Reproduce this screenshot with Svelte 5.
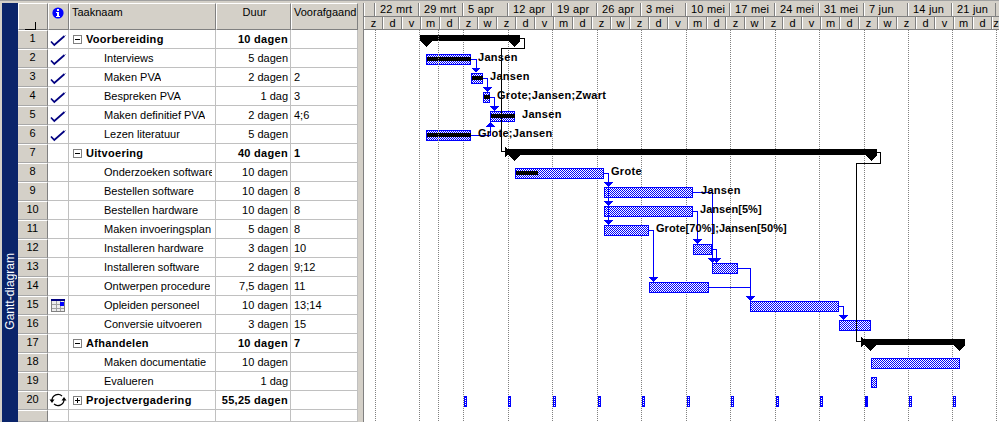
<script lang="ts">
	const weekNames = ['22 mrt', '29 mrt', '5 apr', '12 apr', '19 apr', '26 apr', '3 mei', '10 mei', '17 mei', '24 mei', '31 mei', '7 jun', '14 jun', '21 jun'];
	const gridX = [375, 419, 463, 508, 552, 597, 641, 686, 730, 775, 819, 864, 908, 952, 996];
	const dayLetters = ['z', 'd', 'v', 'm', 'd', 'z', 'w'];

	// chart starts at x=363, the svg uses page coordinates
	const chartLeft = 363;
	const chartRight = 999;
	const weeks = weekNames.map((name, i) => ({
		name,
		width: (i + 1 < gridX.length ? gridX[i + 1] : chartRight) - gridX[i]
	}));
	const days: { letter: string; width: number }[] = [];
	for (let i = 0; i < 34; i++) {
		const a = Math.round(363 + 19.03 * i);
		const b = Math.min(chartRight, Math.round(363 + 19.03 * (i + 1)));
		days.push({ letter: dayLetters[i % 7], width: b - a });
	}

	const tasks = [
		{ n: 1, name: 'Voorbereiding', dur: '10 dagen', pre: '', sum: 'open', check: true },
		{ n: 2, name: 'Interviews', dur: '5 dagen', pre: '', check: true },
		{ n: 3, name: 'Maken PVA', dur: '2 dagen', pre: '2', check: true },
		{ n: 4, name: 'Bespreken PVA', dur: '1 dag', pre: '3', check: true },
		{ n: 5, name: 'Maken definitief PVA', dur: '2 dagen', pre: '4;6', check: true },
		{ n: 6, name: 'Lezen literatuur', dur: '5 dagen', pre: '', check: true },
		{ n: 7, name: 'Uitvoering', dur: '40 dagen', pre: '1', sum: 'open' },
		{ n: 8, name: 'Onderzoeken software', dur: '10 dagen', pre: '' },
		{ n: 9, name: 'Bestellen software', dur: '10 dagen', pre: '8' },
		{ n: 10, name: 'Bestellen hardware', dur: '10 dagen', pre: '8' },
		{ n: 11, name: 'Maken invoeringsplan', dur: '5 dagen', pre: '8' },
		{ n: 12, name: 'Installeren hardware', dur: '3 dagen', pre: '10' },
		{ n: 13, name: 'Installeren software', dur: '2 dagen', pre: '9;12' },
		{ n: 14, name: 'Ontwerpen procedure', dur: '7,5 dagen', pre: '11' },
		{ n: 15, name: 'Opleiden personeel', dur: '10 dagen', pre: '13;14', cal: true },
		{ n: 16, name: 'Conversie uitvoeren', dur: '3 dagen', pre: '15' },
		{ n: 17, name: 'Afhandelen', dur: '10 dagen', pre: '7', sum: 'open' },
		{ n: 18, name: 'Maken documentatie', dur: '10 dagen', pre: '' },
		{ n: 19, name: 'Evalueren', dur: '1 dag', pre: '' },
		{ n: 20, name: 'Projectvergadering', dur: '55,25 dagen', pre: '', sum: 'closed', recur: true }
	];

	const top = (row: number) => 30 + (row - 1) * 19;

	const bars = [
		{ r: 2, a: 426, b: 471, done: 471 },
		{ r: 3, a: 471, b: 483, done: 483 },
		{ r: 4, a: 483, b: 490, done: 490 },
		{ r: 5, a: 490, b: 515, done: 515 },
		{ r: 6, a: 426, b: 471, done: 471 },
		{ r: 8, a: 515, b: 604, done: 538 },
		{ r: 9, a: 604, b: 693 },
		{ r: 10, a: 604, b: 693 },
		{ r: 11, a: 604, b: 649 },
		{ r: 12, a: 693, b: 712 },
		{ r: 13, a: 712, b: 738 },
		{ r: 14, a: 649, b: 709 },
		{ r: 15, a: 750, b: 839 },
		{ r: 16, a: 839, b: 871 },
		{ r: 18, a: 871, b: 960 },
		{ r: 19, a: 871, b: 877 }
	];

	const summaries = [
		{ r: 1, a: 420, b: 520 },
		{ r: 7, a: 508, b: 877 },
		{ r: 17, a: 864, b: 965 }
	];

	const labels = [
		{ r: 2, x: 478, text: 'Jansen' },
		{ r: 3, x: 490, text: 'Jansen' },
		{ r: 4, x: 497, text: 'Grote;Jansen;Zwart' },
		{ r: 5, x: 522, text: 'Jansen' },
		{ r: 6, x: 478, text: 'Grote;Jansen' },
		{ r: 8, x: 611, text: 'Grote' },
		{ r: 9, x: 701, text: 'Jansen' },
		{ r: 10, x: 700, text: 'Jansen[5%]', tight: true },
		{ r: 11, x: 656, text: 'Grote[70%];Jansen[50%]', tight: true }
	];

	// [path, arrow tip x, arrow tip y]
	const links: [string, number, number][] = [
		['M471 59.5H476V70', 476, 72],
		['M483 78.5H487.5V89', 487.5, 91],
		['M490 97.5H494.5V108', 494.5, 110],
		['M604 173.5H608.5V224', 608.5, 186],
		['M604 173.5H608.5V224', 608.5, 205],
		['M604 173.5H608.5V224', 608.5, 224],
		['M693 192.5H712.5V260', 712.5, 262],
		['M712 249.5H716.5V260', 716.5, 262],
		['M693 211.5H697.5V241', 697.5, 243],
		['M649 230.5H653.5V279', 653.5, 281],
		['M738 268.5H750.5V298', 750.5, 300],
		['M709 287.5H750.5V298', 750.5, 300],
		['M839 306.5H843.5V317', 843.5, 319]
	];

	const ticks = [464, 508, 553, 598, 642, 687, 731, 776, 820, 865, 909, 953];
</script>

<div class="page">
	<aside class="sidebar"><span>Gantt-diagram</span></aside>

	<section class="table">
		<div class="row head">
			<div class="corner"><i class="corner-v"></i><i class="corner-h"></i></div>
			<div class="hcell info">
				<svg width="14" height="14" viewBox="0 0 14 14">
					<circle cx="7" cy="7" r="5.6" fill="#0000ff" />
					<rect x="6" y="3" width="2" height="2" fill="#fff" />
					<rect x="5" y="6" width="3" height="1" fill="#fff" />
					<rect x="6" y="6" width="2" height="4" fill="#fff" />
					<rect x="5" y="10" width="4" height="1" fill="#fff" />
				</svg>
			</div>
			<div class="hcell">Taaknaam</div>
			<div class="hcell center">Duur</div>
			<div class="hcell clip">Voorafgaand</div>
		</div>

		{#each tasks as t (t.n)}
			<div class="row" class:bold={t.sum}>
				<div class="num">{t.n}</div>
				<div class="cell ind">
					{#if t.check}
						<svg width="20" height="18" viewBox="0 0 20 18">
							<path d="M3 11.5L6.3 15L16.5 6" fill="none" stroke="#000080" stroke-width="1.7" />
							<rect x="17" y="5" width="1" height="1" fill="#a0a0c0" />
						</svg>
					{:else if t.cal}
						<svg width="20" height="18" viewBox="0 0 20 18">
							<rect x="3.5" y="3.5" width="13" height="12" fill="#ececec" stroke="#808080" />
							<rect x="3" y="3" width="14" height="2" fill="#000080" />
							<path d="M4 8.5H16M4 12.5H16M8.5 5V15M12.5 5V15" stroke="#a0a0a0" />
							<rect x="12" y="6" width="4" height="4" fill="#0000ff" />
						</svg>
					{:else if t.recur}
						<svg width="20" height="18" viewBox="0 0 20 18">
							<path d="M4 9A6 6 0 0 1 14 5" fill="none" stroke="#000" stroke-width="1.2" />
							<path d="M16 9A6 6 0 0 1 6 13" fill="none" stroke="#000" stroke-width="1.2" />
							<path d="M1.5 8.5H6.5L4 12ZM13.5 9.5H18.5L16 6Z" fill="#000" />
						</svg>
					{/if}
				</div>
				<div class="cell name" class:sub={!t.sum}>
					{#if t.sum}
						<svg class="box" width="9" height="9" viewBox="0 0 9 9">
							<rect x="0.5" y="0.5" width="8" height="8" fill="#fff" stroke="#808080" />
							<path d="M2 4.5H7" stroke="#000" />
							{#if t.sum === 'closed'}<path d="M4.5 2V7" stroke="#000" />{/if}
						</svg>
					{/if}
					<span>{t.name}</span>
				</div>
				<div class="cell dur">{t.dur}</div>
				<div class="cell pre">{t.pre}</div>
			</div>
		{/each}

		<div class="row tail">
			<div class="num"></div>
			<div class="cell"></div>
			<div class="cell"></div>
			<div class="cell"></div>
			<div class="cell"></div>
		</div>
	</section>

	<div class="splitter"></div>

	<section class="chart">
		<div class="tier weeks">
			<div class="tcell" style="width:{gridX[0] - chartLeft - 1}px"></div>
			{#each weeks as w}
				<div class="tcell week" style="width:{w.width}px">{w.name}</div>
			{/each}
		</div>
		<div class="tier days">
			{#each days as d}
				<div class="tcell day" style="width:{d.width}px">{d.letter}</div>
			{/each}
		</div>

		<svg class="gantt" width="635" height="392" viewBox="364 30 635 392" shape-rendering="crispEdges">
			<defs>
				<pattern id="check" width="2" height="2" patternUnits="userSpaceOnUse">
					<rect width="2" height="2" fill="#fff" />
					<rect width="1" height="1" fill="#0000ff" />
					<rect x="1" y="1" width="1" height="1" fill="#0000ff" />
				</pattern>
			</defs>

			{#each gridX as x}
				<path d="M{x + 0.5} 30V422" stroke="#808080" stroke-dasharray="1 1" />
			{/each}

			{#each bars as b}
				<rect x={b.a + 0.5} y={top(b.r) + 5.5} width={b.b - b.a - 1} height="10" fill="url(#check)" stroke="#0000ff" />
				{#if b.done}
					<rect x={b.a + 1} y={top(b.r) + 8} width={b.done - b.a - 1} height="4" fill="#000" />
				{/if}
			{/each}

			{#each summaries as s}
				<rect x={s.a} y={top(s.r) + 5} width={s.b - s.a} height="6" fill="#000" />
				<path d="M{s.a} {top(s.r) + 11}h12l-6 6z" fill="#000" />
				<path d="M{s.b - 11} {top(s.r) + 11}h11l-5.5 6z" fill="#000" />
			{/each}

			{#each ticks as x, i}
				<rect x={x + 0.5} y="396.5" width="2" height="10" fill={i === 9 ? '#0000ff' : 'url(#check)'} stroke="#0000ff" />
			{/each}

			<!-- summary links -->
			<path d="M520 38.5H524.5V48.5H501.5V151.5H506" fill="none" stroke="#000" />
			<path d="M505 147L510 152L505 157Z" fill="#000" />
			<path d="M876 152.5H880.5V163.5H856.5V341.5H861" fill="none" stroke="#000" />
			<path d="M861 337L866 342L861 347Z" fill="#000" />

			<!-- task links -->
			{#each links as [d, x, y]}
				<path {d} fill="none" stroke="#0000ff" />
				<path d="M{x - 4.5} {y - 4}h9l-4.5 5z" fill="#0000ff" />
			{/each}
			<path d="M471 135.5H490.5V126" fill="none" stroke="#0000ff" />
			<path d="M486 127h9l-4.5 -5z" fill="#0000ff" />

			<path d="M438.5 30V422" stroke="#808080" stroke-dasharray="1 1" />

			{#each labels as l}
				<text x={l.x} y={top(l.r) + 12} class="label" class:tight={l.tight} shape-rendering="auto">{l.text}</text>
			{/each}
		</svg>
	</section>
</div>

<style>
	:global(body) {
		margin: 0;
		background: #d4d0c8;
	}

	.page {
		display: flex;
		width: 999px;
		height: 422px;
		padding: 2px 0 0 2px;
		box-sizing: border-box;
		overflow: hidden;
		background: #d4d0c8;
		border-top: 1px solid #a0a0a0;
		font-family: "Liberation Sans", Arial, sans-serif;
		font-size: 11px;
		color: #000;
	}

	.sidebar {
		width: 16px;
		flex-shrink: 0;
		background: #0a246a;
		color: #fff;
		display: flex;
		justify-content: center;
		align-items: flex-end;
		padding-bottom: 92px;
		box-sizing: border-box;
		font-size: 12px;
	}

	.sidebar span {
		writing-mode: vertical-rl;
		transform: rotate(180deg);
		white-space: nowrap;
	}

	/* === TABLE === */
	.table {
		width: 340px;
		flex-shrink: 0;
		background: #fff;
	}

	.row {
		display: grid;
		grid-template-columns: 30px 21px 147px 75px 67px;
		height: 19px;
	}

	.row.head {
		height: 27px;
	}

	.row.tail {
		height: 12px;
	}

	.bold {
		font-weight: bold;
	}

	.corner,
	.hcell,
	.num {
		background: #d4d0c8;
		border-top: 1px solid #fff;
		border-left: 1px solid #fff;
		border-right: 1px solid #808080;
		border-bottom: 1px solid #808080;
		box-sizing: border-box;
	}

	.corner {
		position: relative;
	}

	.corner-v {
		position: absolute;
		left: 16px;
		top: 18px;
		width: 1px;
		height: 8px;
		background: #000;
	}

	.corner-h {
		position: absolute;
		left: 6px;
		top: 25px;
		width: 11px;
		height: 1px;
		background: #000;
	}

	.hcell {
		padding: 1px 0 0 2px;
		line-height: 14px;
		overflow: hidden;
		white-space: nowrap;
	}

	.hcell.info {
		padding: 2px 0 0 2px;
	}

	.hcell.center {
		text-align: center;
	}

	.num {
		text-align: center;
		line-height: 14px;
		font-weight: normal;
		border-bottom-color: #a8a8a8;
		border-left: 0;
	}

	.cell {
		border-right: 1px solid #c0c0c0;
		border-bottom: 1px solid #c0c0c0;
		box-sizing: border-box;
		line-height: 18px;
		white-space: nowrap;
		overflow: hidden;
		display: flex;
		align-items: center;
	}

	.ind svg {
		display: block;
	}

	.name {
		padding: 0 3px 0 4px;
		gap: 4px;
	}

	.name.sub {
		padding-left: 35px;
	}

	.name span {
		overflow: hidden;
		min-width: 0;
	}

	.bold .name span,
	.bold .dur {
		letter-spacing: 0.3px;
	}

	.dur {
		justify-content: flex-end;
		padding-right: 2px;
	}

	.pre {
		padding-left: 3px;
	}

	.box {
		flex-shrink: 0;
	}

	.splitter {
		width: 5px;
		flex-shrink: 0;
		background: #d4d0c8;
		border-right: 1px solid #808080;
	}

	/* === CHART === */
	.chart {
		flex: 1;
		min-width: 0;
		background: #fff;
		overflow: hidden;
	}

	.tier {
		display: flex;
		height: 14px;
		background: #d4d0c8;
		border-bottom: 1px solid #808080;
		box-sizing: border-box;
	}

	.tier.days {
		height: 13px;
	}

	.tcell {
		flex-shrink: 0;
		box-sizing: border-box;
		border-right: 1px solid #808080;
		border-left: 1px solid #fff;
		line-height: 12px;
		white-space: nowrap;
		overflow: hidden;
	}

	.week {
		padding-left: 4px;
		line-height: 13px;
		letter-spacing: 0.2px;
	}

	.day {
		text-align: center;
	}

	.gantt {
		display: block;
	}

	.label {
		font: bold 11px "Liberation Sans", Arial, sans-serif;
		letter-spacing: 0.3px;
		fill: #000;
	}

	.label.tight {
		letter-spacing: 0.05px;
	}
</style>
